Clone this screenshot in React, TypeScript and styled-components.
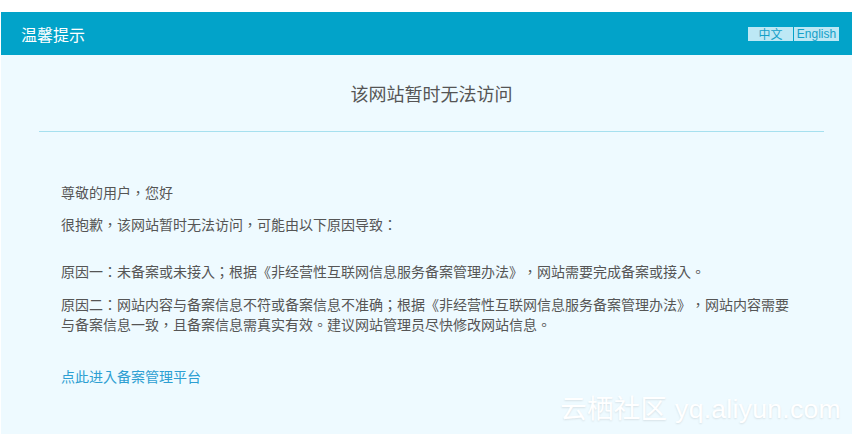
import React from "react";
import styled, { createGlobalStyle } from "styled-components";

const Global = createGlobalStyle`
  html, body { margin: 0; padding: 0; background: #ffffff; }
  body {
    font-family: "Noto Sans CJK TC", "Noto Sans CJK SC", "Noto Sans", sans-serif;
    text-spacing-trim: space-all;
  }
`;

const Page = styled.div`
  position: relative;
  margin: 12px 0 0 1px;
  min-height: 422px;
  background: #eefaff;
  overflow: hidden;
`;

const Header = styled.header`
  height: 43px;
  background: #02a3c9;
  display: flex;
  align-items: center;
  justify-content: space-between;
  padding: 0 13px 0 20px;
`;

const HeaderTitle = styled.h1`
  margin: 0;
  font-size: 16px;
  font-weight: 400;
  line-height: 20px;
  color: #ffffff;
  font-family: "Noto Sans CJK SC", sans-serif;
`;

const LangBar = styled.div`
  display: flex;
  gap: 1px;
  margin-top: 1px;
`;

const LangButton = styled.span<{ $latin?: boolean }>`
  width: 45px;
  height: 14px;
  line-height: 14px;
  text-align: center;
  background: #bde8f5;
  color: #14a0c8;
  font-size: 12px;
  font-family: ${(p) =>
    p.$latin ? `"Liberation Sans", sans-serif` : `"Noto Sans CJK SC", sans-serif`};
  cursor: pointer;
`;

const Main = styled.main`
  margin: 0 28px 0 38px;
`;

const Heading = styled.h2`
  margin: 0;
  padding: 26px 0 26px;
  text-align: center;
  font-size: 18px;
  line-height: 24px;
  font-weight: 400;
  color: #555555;
  font-family: "Noto Sans CJK SC", sans-serif;
  border-bottom: 1px solid #a6e0ef;
`;

const Body = styled.section`
  padding: 50px 0 0 22px;
  max-width: 732px;
`;

const Para = styled.p<{ $space: number }>`
  margin: ${(p) => p.$space}px 0 0;
  font-size: 14px;
  line-height: 20px;
  color: #555555;
`;

const Link = styled.a`
  display: block;
  margin-top: 32px;
  font-size: 14px;
  line-height: 20px;
  color: #2d9fd2;
  text-decoration: none;
`;

const Watermark = styled.div`
  position: absolute;
  right: 11px;
  bottom: 10px;
  font-family: "Liberation Sans", "Noto Sans CJK SC", sans-serif;
  font-size: 26.5px;
  line-height: 30px;
  color: #ffffff;
  text-shadow: 0 1px 2px rgba(0, 0, 0, 0.1);
  letter-spacing: 0.3px;
  white-space: nowrap;
`;

export default function App() {
  return (
    <>
      <Global />
      <Page>
        <Header>
          <HeaderTitle>温馨提示</HeaderTitle>
          <LangBar>
            <LangButton>中文</LangButton>
            <LangButton $latin>English</LangButton>
          </LangBar>
        </Header>
        <Main>
          <Heading>该网站暂时无法访问</Heading>
          <Body>
            <Para $space={0}>尊敬的用户，您好</Para>
            <Para $space={12}>很抱歉，该网站暂时无法访问，可能由以下原因导致：</Para>
            <Para $space={27}>
              原因一：未备案或未接入；根据《非经营性互联网信息服务备案管理办法》，网站需要完成备案或接入。
            </Para>
            <Para $space={13}>
              原因二：网站内容与备案信息不符或备案信息不准确；根据《非经营性互联网信息服务备案管理办法》，网站内容需要与备案信息一致，且备案信息需真实有效。建议网站管理员尽快修改网站信息。
            </Para>
            <Link href="#">点此进入备案管理平台</Link>
          </Body>
        </Main>
        <Watermark>云栖社区 yq.aliyun.com</Watermark>
      </Page>
    </>
  );
}
